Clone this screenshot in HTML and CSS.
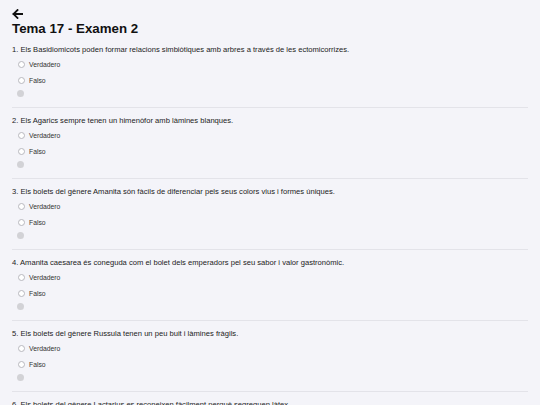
FILE: index.html
```html
<!DOCTYPE html>
<html lang="ca">
<head>
<meta charset="utf-8">
<title>Tema 17 - Examen 2</title>
<link rel="stylesheet" href="styles.css">
</head>
<body>
<main class="page">
  <header class="head">
    <svg class="back" width="11" height="10" viewBox="0 0 11 10" aria-label="Enrere">
      <path d="M10.5 5H1.5M5.5 1L1.5 5L5.5 9" fill="none" stroke="#111" stroke-width="1.8" stroke-linecap="square" stroke-linejoin="miter"/>
    </svg>
    <h1 class="title">Tema 17 - Examen 2</h1>
  </header>

  <section class="question">
    <p class="q">1. Els Basidiomicots poden formar relacions simbiòtiques amb arbres a través de les ectomicorrizes.</p>
    <label class="opt"><span class="radio"></span>Verdadero</label>
    <label class="opt"><span class="radio"></span>Falso</label>
    <div class="status"><span class="dot"></span></div>
  </section>

  <section class="question">
    <p class="q">2. Els Agarics sempre tenen un himenòfor amb làmines blanques.</p>
    <label class="opt"><span class="radio"></span>Verdadero</label>
    <label class="opt"><span class="radio"></span>Falso</label>
    <div class="status"><span class="dot"></span></div>
  </section>

  <section class="question">
    <p class="q">3. Els bolets del gènere Amanita són fàcils de diferenciar pels seus colors vius i formes úniques.</p>
    <label class="opt"><span class="radio"></span>Verdadero</label>
    <label class="opt"><span class="radio"></span>Falso</label>
    <div class="status"><span class="dot"></span></div>
  </section>

  <section class="question">
    <p class="q">4. Amanita caesarea és coneguda com el bolet dels emperadors pel seu sabor i valor gastronòmic.</p>
    <label class="opt"><span class="radio"></span>Verdadero</label>
    <label class="opt"><span class="radio"></span>Falso</label>
    <div class="status"><span class="dot"></span></div>
  </section>

  <section class="question">
    <p class="q">5. Els bolets del gènere Russula tenen un peu buit i làmines fràgils.</p>
    <label class="opt"><span class="radio"></span>Verdadero</label>
    <label class="opt"><span class="radio"></span>Falso</label>
    <div class="status"><span class="dot"></span></div>
  </section>

  <section class="question">
    <p class="q">6. Els bolets del gènere Lactarius es reconeixen fàcilment perquè segreguen làtex.</p>
    <label class="opt"><span class="radio"></span>Verdadero</label>
    <label class="opt"><span class="radio"></span>Falso</label>
    <div class="status"><span class="dot"></span></div>
  </section>
</main>
</body>
</html>
```

FILE: styles.css
```css
html, body {
  margin: 0;
  padding: 0;
  background: #f4f4f9;
}
body {
  font-family: "Liberation Sans", Arial, sans-serif;
  color: #222;
  overflow: hidden;
  height: 405px;
}
.page {
  padding: 9px 12px 0 12px;
}
.head {
  display: flex;
  flex-direction: column;
  align-items: flex-start;
}
.back {
  display: block;
  margin-bottom: 2px;
}
.title {
  margin: 0;
  font-size: 13.3px;
  line-height: 16px;
  font-weight: bold;
  color: #111;
}
.question {
  border-bottom: 1px solid #e3e3e9;
  padding-bottom: 9px;
}
.q {
  margin: 7px 0 0 0;
  font-size: 7.6px;
  line-height: 12px;
  color: #222;
}
.opt {
  display: flex;
  align-items: center;
  height: 16px;
  font-size: 6.8px;
  color: #333;
  padding-left: 6px;
}
.radio {
  width: 5px;
  height: 5px;
  border: 1px solid #b8b8be;
  border-radius: 50%;
  background: #fff;
  margin-right: 4px;
}
.status {
  display: flex;
  align-items: center;
  height: 10px;
  padding-left: 5px;
}
.dot {
  width: 7px;
  height: 7px;
  border-radius: 50%;
  background: #d2d2d6;
}
```
